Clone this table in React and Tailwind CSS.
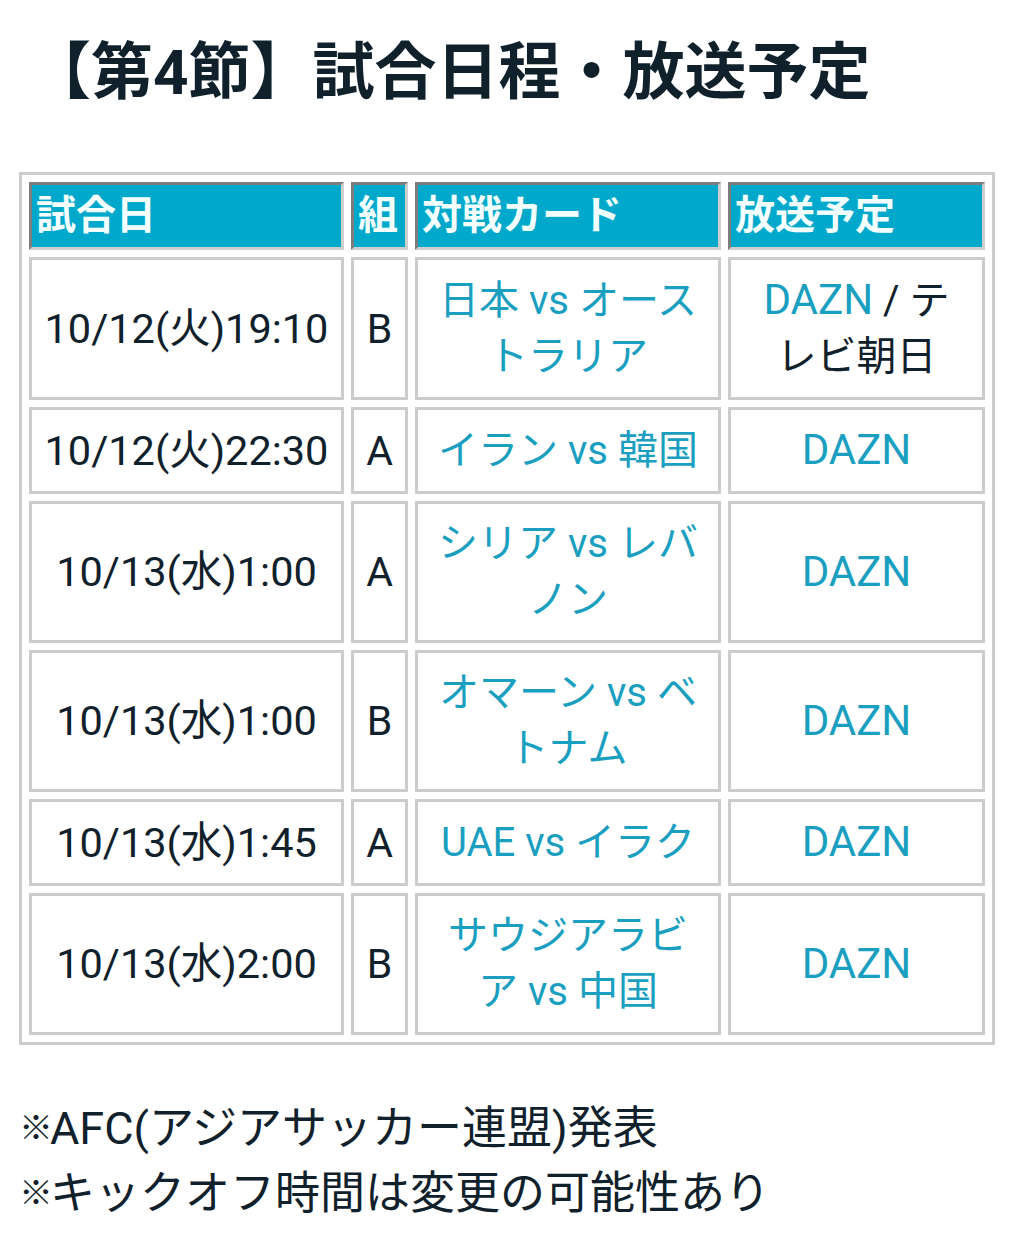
import React from "react";

const rows = [
  { date: "10/12(火)19:10", group: "B", match: "日本 vs オーストラリア", tv: "DAZN", extra: " / テレビ朝日" },
  { date: "10/12(火)22:30", group: "A", match: "イラン vs 韓国", tv: "DAZN" },
  { date: "10/13(水)1:00", group: "A", match: "シリア vs レバノン", tv: "DAZN" },
  { date: "10/13(水)1:00", group: "B", match: "オマーン vs ベトナム", tv: "DAZN" },
  { date: "10/13(水)1:45", group: "A", match: "UAE vs イラク", tv: "DAZN" },
  { date: "10/13(水)2:00", group: "B", match: "サウジアラビア vs 中国", tv: "DAZN" },
];

const headers = ["試合日", "組", "対戦カード", "放送予定"];

const notes = ["AFC(アジアサッカー連盟)発表", "キックオフ時間は変更の可能性あり"];

const App = () => {
  return (
    <div className="min-h-screen bg-white px-[19px] pt-[33px] pb-10 text-[#10212c] font-[Roboto,'Noto_Sans_CJK_JP',sans-serif]">
      <h1 className="pl-[10px] text-[62px] leading-[80px] font-bold">【第4節】試合日程・放送予定</h1>

      <table className="mt-[59px] w-full table-fixed border-separate border-spacing-[7px] border-[3px] border-[#cccccc]">
        <colgroup>
          <col className="w-[315px]" />
          <col className="w-[57px]" />
          <col className="w-[306px]" />
          <col className="w-[257px]" />
        </colgroup>
        <thead>
          <tr>
            {headers.map((h, index) => (
              <th
                key={index}
                className="border-[3px] border-t-[#7d7d7d] border-l-[#7d7d7d] border-r-[#cfcfcf] border-b-[#cfcfcf] bg-[#00a9cc] px-1 py-[3px] text-left text-[40px] leading-[56px] font-bold text-[#f4ffff]"
              >
                {h}
              </th>
            ))}
          </tr>
        </thead>
        <tbody>
          {rows.map((row, index) => (
            <tr key={index}>
              <td className="border-[3px] border-[#cccccc] px-1 py-3 text-center text-[41.5px] leading-[56px] whitespace-nowrap">
                {row.date}
              </td>
              <td className="border-[3px] border-[#cccccc] px-1 py-3 text-center text-[41px] leading-[56px]">
                {row.group}
              </td>
              <td className="border-[3px] border-[#cccccc] px-3 py-3 text-center text-[40px] leading-[56px] text-[#1a9fc0]">
                {row.match}
              </td>
              <td className="border-[3px] border-[#cccccc] px-5 py-3 text-center text-[40px] leading-[56px]">
                <span className="text-[42px] text-[#1a9fc0]">{row.tv}</span>
                {row.extra && <span>{row.extra}</span>}
              </td>
            </tr>
          ))}
        </tbody>
      </table>

      <div className="mt-[51px] text-[45px] leading-[65px]">
        {notes.map((note, index) => (
          <p key={index}>
            <span className="mr-[-3px] align-[4px] text-[34px] font-medium">※</span>
            {note}
          </p>
        ))}
      </div>
    </div>
  );
};

export default App;
